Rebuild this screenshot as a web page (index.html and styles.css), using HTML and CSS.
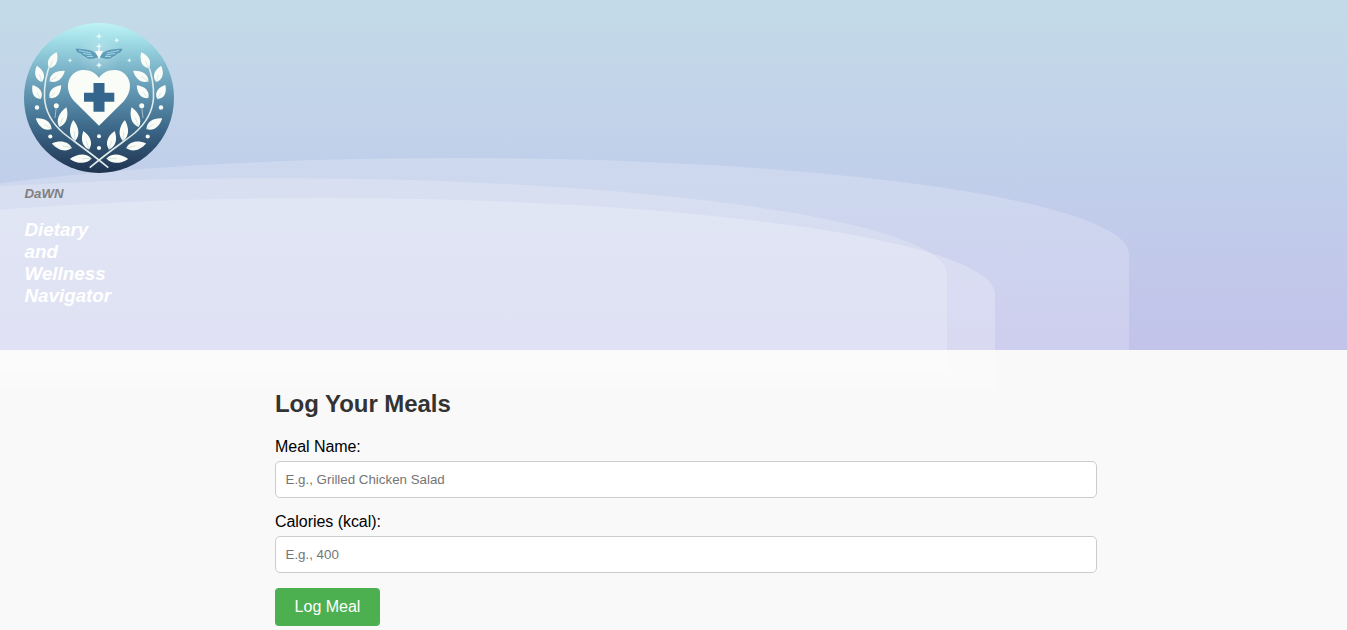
FILE: index.html
```html
<!DOCTYPE html>
<html lang="en">
<head>
<meta charset="utf-8">
<title>DaWN</title>
<link rel="stylesheet" href="styles.css">
</head>
<body>
<header class="hero">
  <div class="wave wave-back"></div>
  <div class="wave wave-mid"></div>
  <div class="wave wave-front"></div>
  <div class="brand">
    <svg class="logo" viewBox="24 23 150 150" aria-hidden="true">
      <defs>
        <linearGradient id="disc" x1="0" y1="0" x2="0" y2="1">
          <stop offset="0" stop-color="#bff3f6"/>
          <stop offset=".12" stop-color="#a0dce6"/>
          <stop offset=".3" stop-color="#7db6ca"/>
          <stop offset=".5" stop-color="#5b8fac"/>
          <stop offset=".72" stop-color="#3a6485"/>
          <stop offset="1" stop-color="#1f3350"/>
        </linearGradient>
        <radialGradient id="glow">
          <stop offset="0" stop-color="#fff" stop-opacity=".25"/>
          <stop offset="1" stop-color="#fff" stop-opacity="0"/>
        </radialGradient>
        <g id="leaf">
          <path d="M0 0C-6 -4 -5.200 -11.500 0 -17.500C5.200 -11.500 6 -4 0 0Z"/>
          <path d="M0 0V-8" fill="none" stroke="#c4dadc" stroke-width=".6"/>
        </g>
        <path id="star" d="M0 -3.200L.9 -.9L3.200 0L.9 .9L0 3.200L-.9 .9L-3.200 0L-.9 -.9Z"/>
        <g id="branch">
          <path d="M51 62C46 74 44 86 44.500 98C45.500 112 53 124 63.300 133C73 141 86 149 108.300 167.700" fill="none" stroke="#dfebea" stroke-width="1.600"/>
          <path d="M56.300 106L55 118" fill="none" stroke="#b9d0d6" stroke-width=".8"/>
          <use href="#leaf" transform="translate(49.3 68) rotate(25)"/>
          <use href="#leaf" transform="translate(41.8 82) rotate(-17) scale(1 .97)"/>
          <use href="#leaf" transform="translate(49.5 81.300) rotate(56) scale(1 1.060)"/>
          <use href="#leaf" transform="translate(40.7 99) rotate(-30) scale(1 .92)"/>
          <use href="#leaf" transform="translate(49.7 98) rotate(42) scale(1 .98)"/>
          <use href="#leaf" transform="translate(51.500 129) rotate(-56) scale(1 1.080)"/>
          <use href="#leaf" transform="translate(59.300 127) rotate(20) scale(1 1.200)"/>
          <use href="#leaf" transform="translate(75 141) rotate(-5) scale(1 1.200)"/>
          <use href="#leaf" transform="translate(89 149.500) rotate(-17) scale(1 1.100)"/>
          <use href="#leaf" transform="translate(71.700 148) rotate(-77) scale(1 1.160)"/>
          <use href="#leaf" transform="translate(91.500 158.500) rotate(-91) scale(1 1.240)"/>
          <circle cx="37" cy="107.500" r="2.200"/>
          <circle cx="56.300" cy="105.700" r="2.500"/>
          <circle cx="50.300" cy="136.500" r="2.100"/>
        </g>
        <g id="wing">
          <path d="M98 57C94 50 88 50 76 49C77 52 79 53 81 53C82 55 84 56 85 56C88 60 94 58 98 57Z" fill="#5d9fbd" stroke="#4a88a6" stroke-width=".6"/>
          <path d="M79 50.500L91 53M83 53.500L92 55M87 56.500L93 56.500" fill="none" stroke="#b5e0e8" stroke-width=".8"/>
        </g>
      </defs>
      <circle cx="99" cy="98" r="75" fill="url(#disc)"/>
      <circle cx="99" cy="54" r="22" fill="url(#glow)"/>
      <use href="#wing"/>
      <use href="#wing" transform="translate(198 0) scale(-1 1)"/>
      <g fill="#fafdf7">
        <use href="#branch"/>
        <use href="#branch" transform="translate(198 0) scale(-1 1)"/>
        <path d="M99 125.700L74 101C63 88 68 72 82 70C90 69.500 96 73 99 78C102 73 108 69.500 116 70C130 72 135 88 124 101Z"/>
        <circle cx="99" cy="136.300" r="2"/>
        <circle cx="99" cy="148" r="2.100"/>
        <path d="M95 51L98 51L99 48L100 51L103 51L101 55L99 59L97 55Z"/>
      </g>
      <g fill="#e6fafa">
        <use href="#star" transform="translate(99 36.300)"/>
        <use href="#star" transform="translate(116.700 40.300) scale(.9)"/>
        <use href="#star" transform="translate(99 46.300)"/>
        <use href="#star" transform="translate(70 60.300) scale(.75)"/>
        <use href="#star" transform="translate(129.300 60.300) scale(.75)"/>
        <use href="#star" transform="translate(99 65.200)"/>
        <circle cx="82" cy="40" r=".6" opacity=".6"/>
      </g>
      <path d="M93.500 83h11v9.700h9.800v9h-9.800v10h-11v-10h-9.500v-9h9.500Z" fill="#34658c"/>
    </svg>
    <p class="brand-name">DaWN</p>
    <h1 class="brand-title">Dietary and Wellness Navigator</h1>
  </div>
</header>
<main class="meal-log">
  <h2 class="heading">Log Your Meals</h2>
  <form class="form">
    <label class="label" for="meal">Meal Name:</label>
    <input class="field" id="meal" type="text" placeholder="E.g., Grilled Chicken Salad">
    <label class="label" for="calories">Calories (kcal):</label>
    <input class="field" id="calories" type="text" placeholder="E.g., 400">
    <button class="submit" type="button">Log Meal</button>
  </form>
</main>
</body>
</html>
```
FILE: styles.css
```css
* { box-sizing: border-box; }
body {
  margin: 0;
  height: 630px;
  overflow: hidden;
  background: #f9f9f9;
  font-family: "Liberation Sans", Arial, sans-serif;
}
.hero {
  position: relative;
  height: 350px;
  padding: 23px 24px;
  background: linear-gradient(180deg, #c3dbe8 0%, #c1d0ea 45%, #c2c3ea 100%);
}
.wave {
  position: absolute;
  width: 100%;
  height: 192px;
  border-radius: 1000% 1000% 0 0;
  background: rgb(255 255 255 / 20%);
}
.wave-back { left: -218px; bottom: 0; }
.wave-mid { left: -400.5px; bottom: -20px; }
.wave-front { left: -352px; bottom: -40px; background: rgb(255 255 255 / 24%); }
.brand { position: relative; width: 150px; }
.logo { display: block; width: 150px; height: 150px; }
.brand-name {
  margin: 13px 0 0;
  padding-left: .5px;
  color: #808080;
  font-size: 13.28px;
  font-style: italic;
  font-weight: bold;
  line-height: 16px;
}
.brand-title {
  width: 100px;
  margin: 17px 0 0;
  padding-left: .5px;
  color: #fff;
  font-size: 18.8px;
  font-style: italic;
  line-height: 22px;
}
.meal-log { width: 822px; margin-left: 275px; padding-top: 40px; }
.heading { margin: 0 0 20px; color: #333; font-size: 24px; line-height: 27px; letter-spacing: -.05px; }
.form { display: flex; flex-direction: column; align-items: flex-start; }
.label { margin-bottom: 5px; font-size: 16px; line-height: 19px; letter-spacing: -.05px; }
.field {
  width: 100%;
  height: 37px;
  margin: 0 0 14px;
  padding: 10px 9.5px;
  border: 1px solid #ccc;
  border-radius: 5px;
  background: #fff;
  font: 13.333px "Liberation Sans", Arial, sans-serif;
}
.submit {
  width: 105px;
  height: 38px;
  margin-top: 1px;
  padding: 0;
  border: 0;
  border-radius: 4px;
  background: #4caf50;
  color: #fff;
  font: 16px "Liberation Sans", Arial, sans-serif;
}
```
